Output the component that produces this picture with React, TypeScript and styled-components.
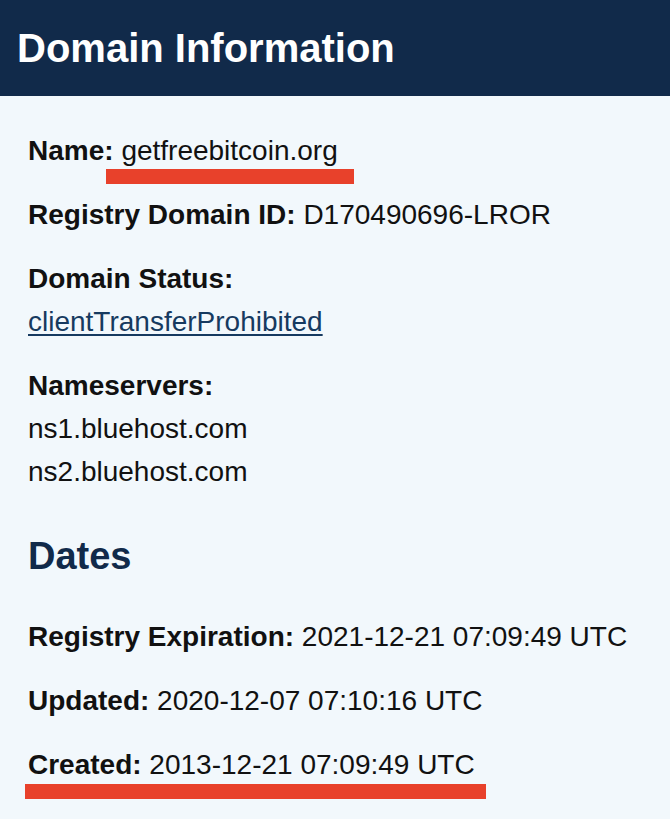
import React from "react";
import styled, { createGlobalStyle } from "styled-components";

const Global = createGlobalStyle`
  html, body {
    margin: 0;
    padding: 0;
    background: #ffffff;
  }
  body {
    font-family: "Liberation Sans", Arial, Helvetica, sans-serif;
    color: #111111;
  }
`;

const Panel = styled.section`
  width: 670px;
  background: #f2f8fc;
  box-shadow: 0 3px 7px rgba(0, 0, 0, 0.12);
  padding-bottom: 33px;
`;

const Header = styled.header`
  height: 96px;
  background: #112a4a;
  display: flex;
  align-items: center;
  padding-left: 17px;
`;

const Title = styled.h1`
  margin: 0;
  color: #ffffff;
  font-size: 40px;
  font-weight: 700;
  line-height: normal;
`;

const Body = styled.div`
  padding: 33px 28px 0 28px;
`;

const Field = styled.p`
  margin: 0 0 21px 0;
  font-size: 28px;
  line-height: 43px;
  &:last-child {
    margin-bottom: 0;
  }
`;

const Label = styled.strong`
  font-weight: 700;
`;

const Line = styled.span`
  display: block;
`;

const Link = styled.a`
  color: #163a60;
  text-decoration: underline;
  text-decoration-thickness: 2px;
  text-underline-offset: 3px;
`;

const SectionTitle = styled.h2`
  margin: 41px 0 37px 0;
  color: #112a4a;
  font-size: 38px;
  font-weight: 700;
  line-height: 44px;
`;

const Marked = styled.span<{ $left: number; $right: number; $top: number }>`
  position: relative;
  &::after {
    content: "";
    position: absolute;
    left: ${(p) => -p.$left}px;
    right: ${(p) => -p.$right}px;
    top: ${(p) => p.$top}px;
    height: 15px;
    background: #e8412b;
  }
`;

export default function App() {
  return (
    <>
      <Global />
      <Panel>
        <Header>
          <Title>Domain Information</Title>
        </Header>
        <Body>
          <Field>
            <Label>Name:</Label>{" "}
            <Marked $left={15} $right={16} $top={34}>
              getfreebitcoin.org
            </Marked>
          </Field>
          <Field>
            <Label>Registry Domain ID:</Label> D170490696-LROR
          </Field>
          <Field>
            <Label>Domain Status:</Label>
            <Line>
              <Link href="#">clientTransferProhibited</Link>
            </Line>
          </Field>
          <Field>
            <Label>Nameservers:</Label>
            <Line>ns1.bluehost.com</Line>
            <Line>ns2.bluehost.com</Line>
          </Field>
          <SectionTitle>Dates</SectionTitle>
          <Field>
            <Label>Registry Expiration:</Label> 2021-12-21 07:09:49 UTC
          </Field>
          <Field>
            <Label>Updated:</Label> 2020-12-07 07:10:16 UTC
          </Field>
          <Field>
            <Marked $left={3} $right={11} $top={35}>
              <Label>Created:</Label> 2013-12-21 07:09:49 UTC
            </Marked>
          </Field>
        </Body>
      </Panel>
    </>
  );
}
